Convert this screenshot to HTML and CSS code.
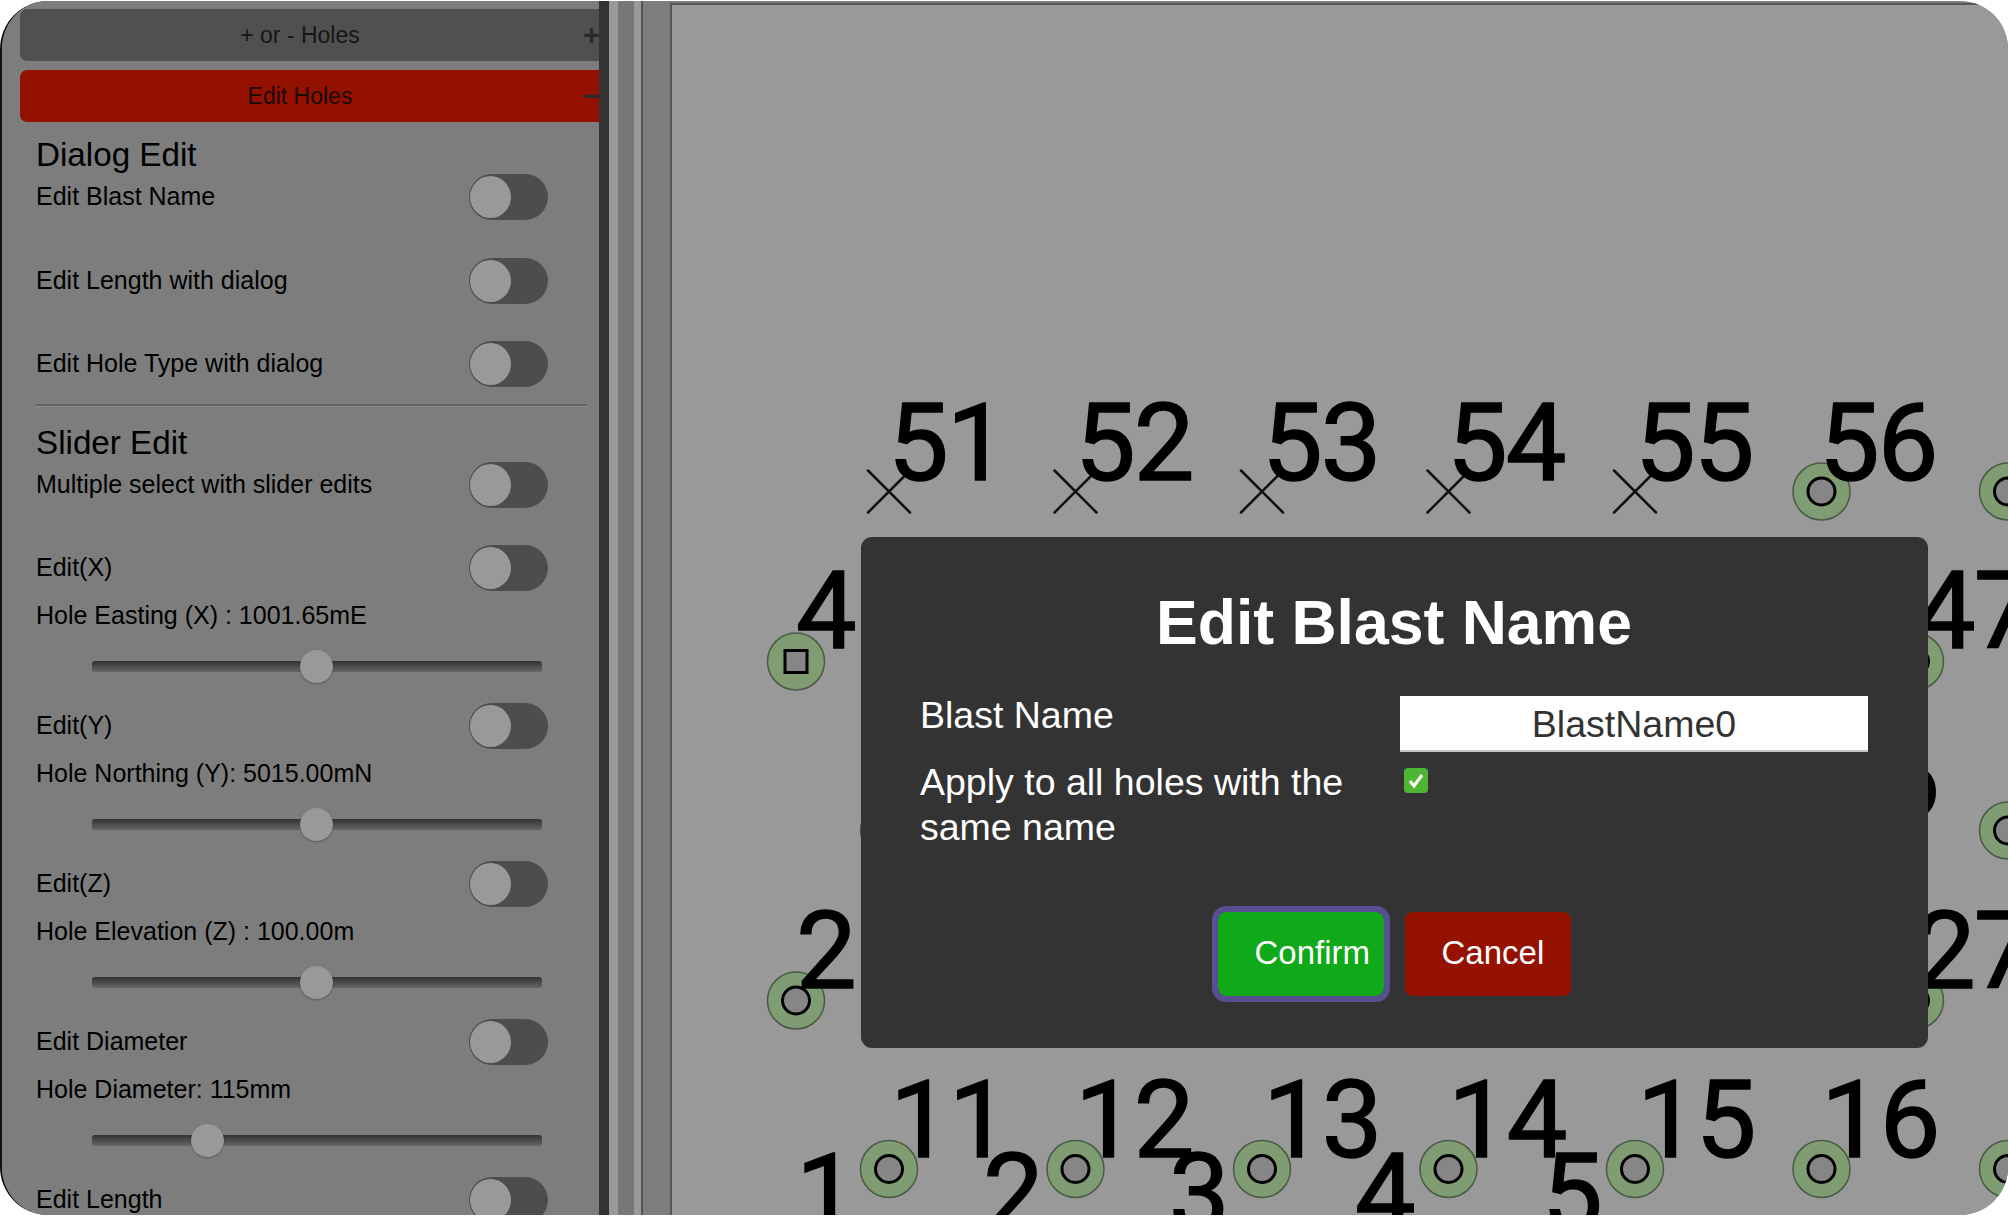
FILE: index.html
```html
<!DOCTYPE html>
<html lang="en">
<head>
    <meta charset="UTF-8">
    <title>Edit Blast Name</title>
    <link rel="stylesheet" href="styles.css">
</head>
<body>
<div class="app">
    <aside class="sidebar">
        <button class="accordion">+ or - Holes<span class="accordion-sign">+</span></button>
        <button class="accordion accordion-open">Edit Holes<span class="accordion-sign">&minus;</span></button>

        <h2 class="section-title">Dialog Edit</h2>
        <div class="row"><span class="row-label">Edit Blast Name</span><span class="toggle"></span></div>
        <div class="row row-spaced"><span class="row-label">Edit Length with dialog</span><span class="toggle"></span></div>
        <div class="row row-spaced"><span class="row-label">Edit Hole Type with dialog</span><span class="toggle"></span></div>
        <div class="divider"></div>

        <h2 class="section-title section-title-tight">Slider Edit</h2>
        <div class="row"><span class="row-label">Multiple select with slider edits</span><span class="toggle"></span></div>

        <div class="row row-spaced"><span class="row-label">Edit(X)</span><span class="toggle"></span></div>
        <div class="value-label">Hole Easting (X) : 1001.65mE</div>
        <input class="slider" type="range" min="0" max="100" step="any" value="49.9">

        <div class="row row-slider"><span class="row-label">Edit(Y)</span><span class="toggle"></span></div>
        <div class="value-label">Hole Northing (Y): 5015.00mN</div>
        <input class="slider" type="range" min="0" max="100" step="any" value="49.9">

        <div class="row row-slider"><span class="row-label">Edit(Z)</span><span class="toggle"></span></div>
        <div class="value-label">Hole Elevation (Z) : 100.00m</div>
        <input class="slider" type="range" min="0" max="100" step="any" value="49.9">

        <div class="row row-slider"><span class="row-label">Edit Diameter</span><span class="toggle"></span></div>
        <div class="value-label">Hole Diameter: 115mm</div>
        <input class="slider" type="range" min="0" max="100" step="any" value="23.7">

        <div class="row row-slider"><span class="row-label">Edit Length</span><span class="toggle"></span></div>
    </aside>

    <div class="resizer"></div>
    <div class="strip strip-light"></div>
    <div class="strip strip-mid"></div>
    <div class="strip strip-light strip-thin"></div>
    <div class="strip strip-line"></div>

    <main class="canvas-wrap">
        <div class="canvas">
            <svg class="plan" width="1336" height="1211" viewBox="672 5 1336 1211" preserveAspectRatio="xMinYMin">
                <defs>
                    <g id="cross">
                        <path d="M-21 -21 L21 21 M-21 21 L21 -21" class="cross-line"/>
                    </g>
                    <g id="hole">
                        <circle r="28.5" class="collar"/>
                        <circle r="13.5" class="bore"/>
                    </g>
                    <g id="hole-square">
                        <circle r="28.5" class="collar"/>
                        <rect x="-11" y="-11" width="22" height="22" class="bore"/>
                    </g>
                </defs>

                <use href="#cross" x="889" y="491.5"/>
                <use href="#cross" x="1075.5" y="491.5"/>
                <use href="#cross" x="1262" y="491.5"/>
                <use href="#cross" x="1448.5" y="491.5"/>
                <use href="#cross" x="1635" y="491.5"/>
                <use href="#hole" x="1821.5" y="491.5"/>
                <use href="#hole" x="2008" y="491.5"/>
                <text class="hole-label" x="888" y="480">51</text>
                <text class="hole-label" x="1075" y="480">52</text>
                <text class="hole-label" x="1262" y="480">53</text>
                <text class="hole-label" x="1447" y="480">54</text>
                <text class="hole-label" x="1635" y="480">55</text>
                <text class="hole-label" x="1819" y="480">56</text>

                <use href="#hole-square" x="796" y="661.5"/>
                <use href="#hole" x="1915" y="661.5"/>
                <text class="hole-label" x="796" y="648">41</text>
                <text class="hole-label" x="1915" y="648">47</text>

                <use href="#hole" x="889" y="830.5"/>
                <use href="#hole" x="2008" y="830.5"/>
                <text class="hole-label" x="1821" y="817">36</text>

                <use href="#hole" x="796" y="1000.5"/>
                <use href="#hole" x="1915" y="1000.5"/>
                <text class="hole-label" x="796" y="988">21</text>
                <text class="hole-label" x="1915" y="988">27</text>

                <use href="#hole" x="889" y="1169"/>
                <use href="#hole" x="1075.5" y="1169"/>
                <use href="#hole" x="1262" y="1169"/>
                <use href="#hole" x="1448.5" y="1169"/>
                <use href="#hole" x="1635" y="1169"/>
                <use href="#hole" x="1821.5" y="1169"/>
                <use href="#hole" x="2008" y="1169"/>
                <text class="hole-label" x="890" y="1157">11</text>
                <text class="hole-label" x="1075" y="1157">12</text>
                <text class="hole-label" x="1263" y="1157">13</text>
                <text class="hole-label" x="1448" y="1157">14</text>
                <text class="hole-label" x="1637" y="1157">15</text>
                <text class="hole-label" x="1821" y="1157">16</text>

                <text class="hole-label" x="796" y="1230">1</text>
                <text class="hole-label" x="983" y="1230">2</text>
                <text class="hole-label" x="1169" y="1230">3</text>
                <text class="hole-label" x="1355" y="1230">4</text>
                <text class="hole-label" x="1542" y="1230">5</text>
            </svg>
        </div>
    </main>

    <div class="dialog">
        <h1 class="dialog-title">Edit Blast Name</h1>
        <div class="dialog-form">
            <label class="dialog-label" for="blastName">Blast Name</label>
            <input class="dialog-input" id="blastName" type="text" value="BlastName0">
            <label class="dialog-label">Apply to all holes with the same name</label>
            <span class="check">
                <svg width="24" height="25" viewBox="0 0 24 25"><path d="M6 13 L10 18 L18 7" class="check-mark"/></svg>
            </span>
        </div>
        <div class="dialog-buttons">
            <button class="dialog-btn btn-confirm">Confirm</button>
            <button class="dialog-btn btn-cancel">Cancel</button>
        </div>
    </div>
</div>
</body>
</html>
```

FILE: styles.css
```css
body {
    margin: 0;
    background-color: #ffffff;
    font-family: "Liberation Sans", Arial, sans-serif;
    overflow: hidden;
}
.app {
    position: relative;
    box-sizing: border-box;
    display: flex;
    width: 2008px;
    height: 1214px;
    margin-top: 1px;
    border-left: 2px solid #111111;
    border-radius: 48px;
    overflow: hidden;
    background-color: #7d7d7d;
}

/* left panel */
.sidebar {
    flex: none;
    box-sizing: border-box;
    width: 597px;
    height: 100%;
    padding: 8px 0 0 34px;
    overflow: hidden;
    background-color: #7d7d7d;
    color: #000000;
}
.accordion {
    position: relative;
    display: block;
    box-sizing: border-box;
    width: 600px;
    height: 52px;
    margin: 0 0 9px -16px;
    padding: 0 40px 0 0;
    border: none;
    border-radius: 7px;
    background-color: #505050;
    color: #161616;
    font-family: inherit;
    font-size: 23px;
    text-align: center;
}
.accordion-open {
    background-color: #941100;
    color: #1a0a06;
}
.accordion-sign {
    position: absolute;
    left: 563px;
    top: 10px;
    color: #2a2a2a;
    font-size: 29px;
    font-weight: bold;
}
.section-title {
    height: 40px;
    margin: 12px 0 0;
    font-size: 33.2px;
    font-weight: normal;
    line-height: 42px;
}
.section-title-tight {
    margin-top: 14.5px;
}
.row {
    display: flex;
    align-items: center;
    justify-content: space-between;
    width: 512px;
    height: 46px;
}
.row-spaced {
    margin-top: 37.5px;
}
.row-slider {
    margin-top: 20px;
}
.row-label {
    margin-bottom: 2px;
    font-size: 25px;
    line-height: 30px;
}
.toggle {
    position: relative;
    flex: none;
    width: 79px;
    height: 46px;
    border-radius: 23px;
    background-color: #4d4d4d;
}
.toggle::before {
    content: "";
    position: absolute;
    left: 1px;
    top: 2px;
    width: 41px;
    height: 42px;
    border-radius: 50%;
    background-color: #999999;
}
.divider {
    width: 551px;
    height: 2px;
    margin-top: 17px;
    border-bottom: 1px solid #8a8a8a;
    background-color: #626262;
}
.value-label {
    margin-top: 9px;
    font-size: 25px;
    line-height: 30px;
}

/* sliders */
.slider {
    display: block;
    width: 450px;
    height: 33px;
    margin: 20px 0 0 56px;
    padding: 0;
    background: transparent;
    -webkit-appearance: none;
    appearance: none;
}
.slider::-webkit-slider-runnable-track {
    height: 11px;
    border-radius: 3px;
    background: linear-gradient(#333333, #666666);
}
.slider::-webkit-slider-thumb {
    width: 33px;
    height: 33px;
    margin-top: -11px;
    border-radius: 50%;
    background-color: #999999;
    box-shadow: 0 1px 2px rgba(0, 0, 0, 0.3);
    -webkit-appearance: none;
    appearance: none;
}

/* bars between panel and canvas */
.resizer {
    flex: none;
    width: 10px;
    background-color: #333333;
}
.strip {
    flex: none;
}
.strip-light {
    width: 9px;
    background-color: #999999;
}
.strip-mid {
    width: 16px;
    background-color: #777777;
}
.strip-thin {
    width: 7px;
}
.strip-line {
    width: 2px;
    background-color: #555555;
}

/* canvas */
.canvas-wrap {
    flex: 1;
    min-width: 0;
    padding: 2px 0 0 27px;
}
.canvas {
    height: 100%;
    border-top: 2px solid #555555;
    border-left: 2px solid #555555;
    background-color: #999999;
}
.plan {
    display: block;
}
.hole-label {
    fill: #000000;
    stroke: #000000;
    stroke-width: 1.5;
    font-family: Roboto, "Liberation Sans", sans-serif;
    font-size: 108px;
    letter-spacing: -2px;
}
.cross-line {
    fill: none;
    stroke: #111111;
    stroke-width: 2.5;
    stroke-linecap: round;
}
.collar {
    fill: #7f9c72;
    stroke: #4a5a44;
    stroke-width: 1.5;
}
.bore {
    fill: #868686;
    stroke: #000000;
    stroke-width: 3;
}

/* dialog */
.dialog {
    position: absolute;
    left: 859px;
    top: 536px;
    box-sizing: border-box;
    width: 1067px;
    height: 511px;
    padding: 49px 60px 0 59px;
    border-radius: 11px;
    background-color: #333333;
    color: #ffffff;
}
.dialog-title {
    margin: 0 0 35px;
    font-size: 62.5px;
    line-height: 72px;
    text-align: center;
}
.dialog-form {
    display: grid;
    grid-template-columns: 480px 468px;
    row-gap: 8px;
    height: 157px;
}
.dialog-label {
    font-size: 37.5px;
    line-height: 45px;
}
.dialog-input {
    box-sizing: border-box;
    width: 468px;
    height: 56px;
    margin-top: 3px;
    padding: 3px 0 0;
    border: none;
    border-bottom: 2px solid #c4c4c4;
    border-radius: 0;
    background-color: #ffffff;
    color: #333333;
    font-family: inherit;
    font-size: 37.5px;
    text-align: center;
}
.check {
    display: block;
    width: 24px;
    height: 25px;
    margin: 8px 0 0 4px;
    border-radius: 4px;
    background-color: #4fb534;
}
.check svg {
    display: block;
}
.check-mark {
    fill: none;
    stroke: #ffffff;
    stroke-width: 3;
}
.dialog-buttons {
    display: flex;
    justify-content: center;
    gap: 21px;
    margin-top: 62px;
}
.dialog-btn {
    box-sizing: border-box;
    width: 166px;
    height: 84px;
    padding: 0 0 3px 37px;
    border: none;
    border-radius: 8px;
    color: #ffffff;
    font-family: inherit;
    font-size: 33px;
    text-align: left;
}
.btn-confirm {
    background-color: #0fa919;
    outline: 6px solid #574f92;
}
.btn-cancel {
    background-color: #951200;
}
```
